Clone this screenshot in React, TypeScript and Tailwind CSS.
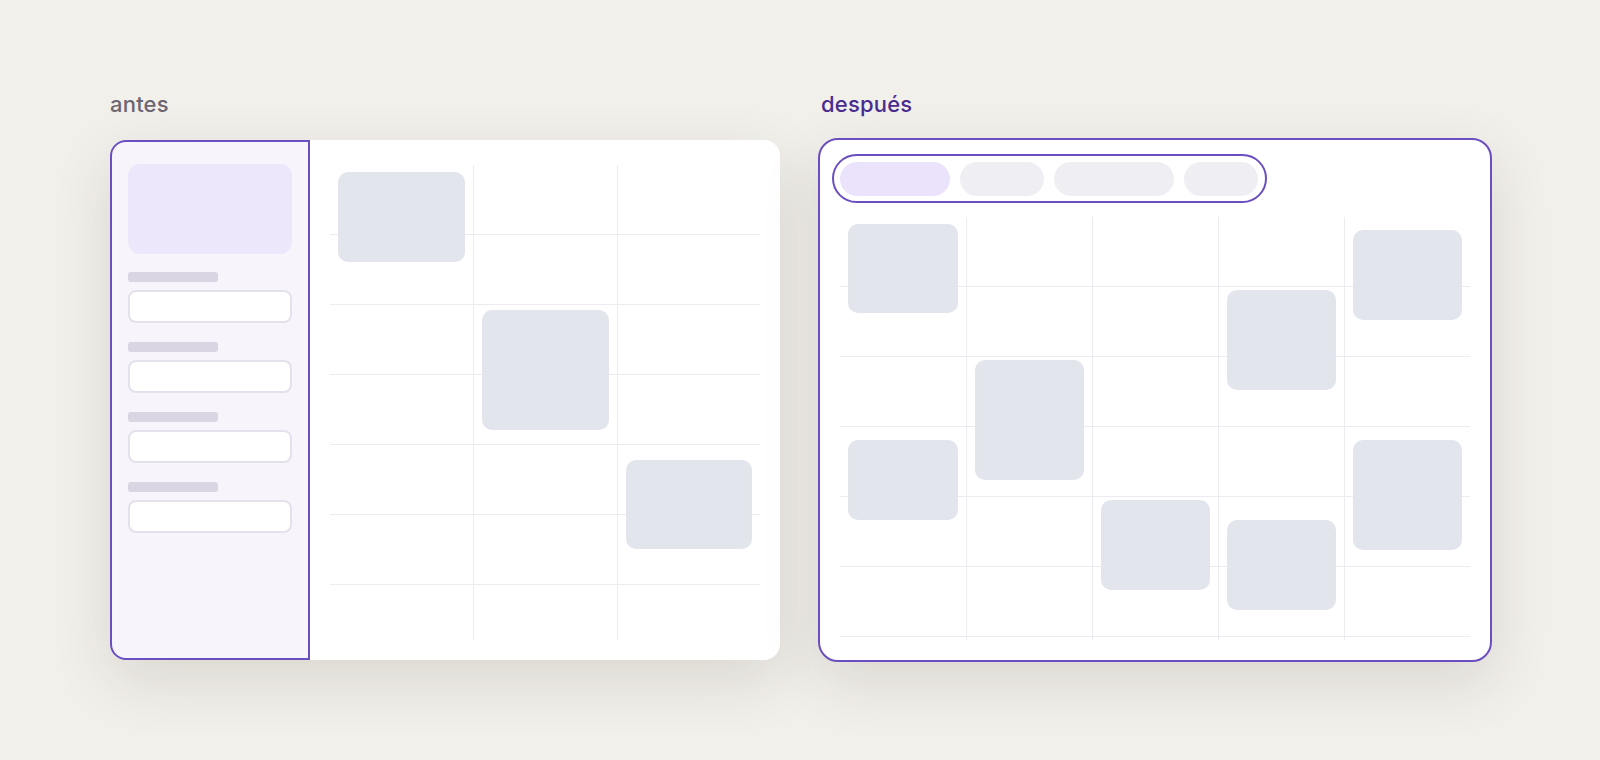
const PURPLE = "border-[#6b4fc0]";

type Block = { mt: number; h: number };

// left grid: 3 columns, block offsets from grid top
const BEFORE_COLS: Block[][] = [
  [{ mt: 7, h: 90 }],
  [{ mt: 145, h: 120 }],
  [{ mt: 295, h: 89 }],
];

// right grid: 5 columns
const AFTER_COLS: Block[][] = [
  [
    { mt: 7, h: 89 },
    { mt: 127, h: 80 },
  ],
  [{ mt: 143, h: 120 }],
  [{ mt: 283, h: 90 }],
  [
    { mt: 73, h: 100 },
    { mt: 130, h: 90 },
  ],
  [
    { mt: 13, h: 90 },
    { mt: 120, h: 110 },
  ],
];

const PILLS = [
  { w: 110, active: true },
  { w: 84, active: false },
  { w: 120, active: false },
  { w: 74, active: false },
];

function Grid({ cols, height, colsClass }: { cols: Block[][]; height: string; colsClass: string }) {
  return (
    <div
      className={[
        "grid overflow-hidden bg-[linear-gradient(to_bottom,transparent_69px,#ecebf1_69px)] bg-[length:100%_70px]",
        height,
        colsClass,
      ].join(" ")}
    >
      {cols.map((blocks, i) => (
        <div key={i} className={["flex flex-col px-2", i > 0 ? "border-l border-[#ecebf1]" : ""].join(" ")}>
          {blocks.map((b, j) => (
            <div
              key={j}
              className="shrink-0 rounded-[10px] bg-[#e2e5ec]"
              style={{ marginTop: b.mt, height: b.h }}
            />
          ))}
        </div>
      ))}
    </div>
  );
}

function Field() {
  return (
    <div className="mt-[19px] first:mt-0">
      <div className="h-[10px] w-[90px] rounded-[3px] bg-[#d9d5e2]" />
      <div className="mt-[8px] h-[33px] rounded-[8px] border-2 border-[#e5e1ec] bg-white" />
    </div>
  );
}

export default function App() {
  return (
    <main
      className="flex h-[760px] w-[1600px] gap-[38px] bg-[#f2f0eb] pl-[110px] pt-[93px]"
      style={{ fontFamily: "Inter, 'Noto Sans', sans-serif" }}
    >
      {/* antes */}
      <section className="flex flex-col">
        <p className="text-[22px] font-medium leading-[22px] tracking-[0.2px] text-[#6b6672]">antes</p>
        <div className="mt-[25px] flex h-[520px] w-[670px] rounded-[16px] bg-white shadow-[0_20px_60px_rgba(40,30,20,0.12)]">
          <aside className={`w-[200px] shrink-0 rounded-l-[16px] border-2 ${PURPLE} bg-[#f7f5fb] px-4 pt-[22px]`}>
            <div className="h-[90px] rounded-[12px] bg-[#ece7fb]" />
            <div className="mt-[18px] flex flex-col">
              <Field />
              <Field />
              <Field />
              <Field />
            </div>
          </aside>
          <div className="flex-1 px-5 pt-[25px]">
            <Grid cols={BEFORE_COLS} height="h-[475px]" colsClass="grid-cols-3" />
          </div>
        </div>
      </section>

      {/* después */}
      <section className="flex flex-col">
        <p className="ml-[3px] text-[22px] font-medium leading-[22px] tracking-[0.2px] text-[#4a2d8f]">después</p>
        <div
          className={`mt-[23px] h-[524px] w-[674px] rounded-[20px] border-2 ${PURPLE} bg-white shadow-[0_20px_60px_rgba(40,30,20,0.12)]`}
        >
          <div className="ml-3 mt-[14px] flex">
            <div className={`flex h-[49px] items-center gap-[10px] rounded-full border-2 ${PURPLE} pl-[6px] pr-[7px]`}>
              {PILLS.map((p, i) => (
                <div
                  key={i}
                  className={["h-[34px] rounded-full", p.active ? "bg-[#ebe3fb]" : "bg-[#efeef3]"].join(" ")}
                  style={{ width: p.w }}
                />
              ))}
            </div>
          </div>
          <div className="mx-5 mt-[14px]">
            <Grid cols={AFTER_COLS} height="h-[423px]" colsClass="grid-cols-5" />
          </div>
        </div>
      </section>
    </main>
  );
}
